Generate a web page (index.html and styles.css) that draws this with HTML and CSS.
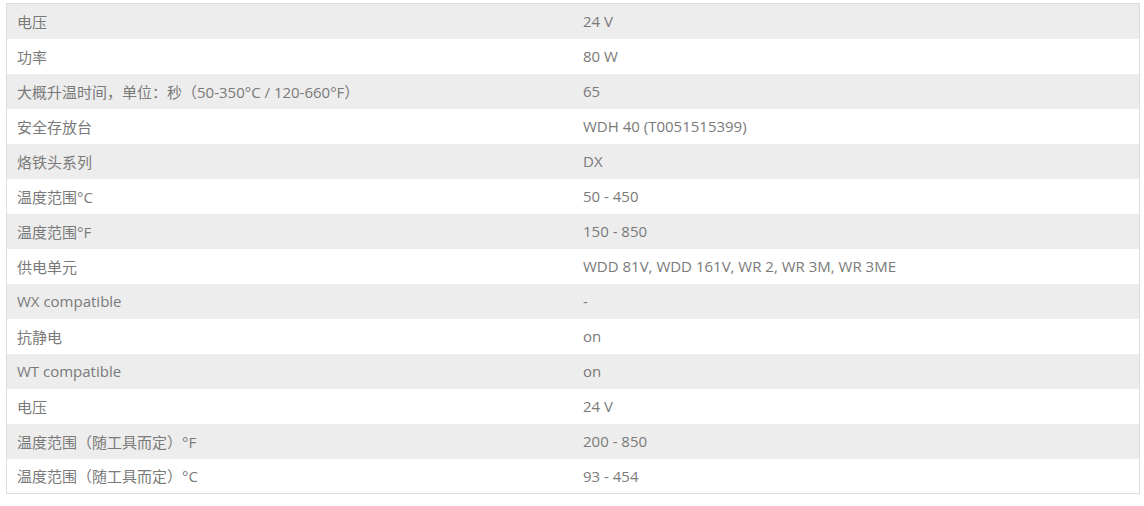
FILE: index.html
```html
<!DOCTYPE html>
<html lang="zh">
<head>
<meta charset="utf-8">
<link rel="stylesheet" href="styles.css">
</head>
<body>
<div class="wrap">
<table class="specs">
<tbody>
<tr><td>电压</td><td>24 V</td></tr>
<tr><td>功率</td><td>80 W</td></tr>
<tr><td>大概升温时间，单位：秒（50-350°C / 120-660°F）</td><td>65</td></tr>
<tr><td>安全存放台</td><td>WDH 40 (T0051515399)</td></tr>
<tr><td>烙铁头系列</td><td>DX</td></tr>
<tr><td>温度范围°C</td><td>50 - 450</td></tr>
<tr><td>温度范围°F</td><td>150 - 850</td></tr>
<tr><td>供电单元</td><td>WDD 81V, WDD 161V, WR 2, WR 3M, WR 3ME</td></tr>
<tr><td>WX compatible</td><td>-</td></tr>
<tr><td>抗静电</td><td>on</td></tr>
<tr><td>WT compatible</td><td>on</td></tr>
<tr><td>电压</td><td>24 V</td></tr>
<tr><td>温度范围（随工具而定）°F</td><td>200 - 850</td></tr>
<tr><td>温度范围（随工具而定）°C</td><td>93 - 454</td></tr>
</tbody>
</table>
</div>
</body>
</html>
```
FILE: styles.css
```css
html, body {
  margin: 0;
  padding: 0;
  background: #fff;
}
.wrap {
  padding: 3px 0 0 6px;
}
.specs {
  width: 1134px;
  border-collapse: collapse;
  border: 1px solid #dddddd;
  font-family: "Open Sans", "Noto Sans CJK SC", sans-serif;
  font-size: 15px;
  color: #7a7a7a;
  table-layout: fixed;
}
.specs td {
  height: 35px;
  padding: 0 10px;
  vertical-align: middle;
  box-sizing: border-box;
  width: 50%;
  white-space: nowrap;
}
.specs tr:nth-child(odd) td {
  background: #ededed;
}
.specs tr:nth-child(even) td {
  background: #ffffff;
}
```
